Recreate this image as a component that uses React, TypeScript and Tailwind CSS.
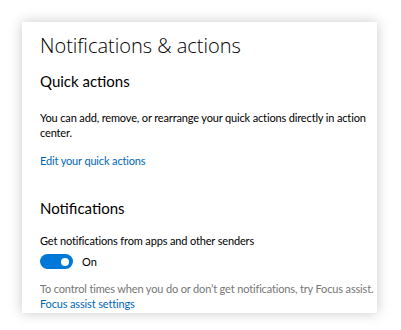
import React from 'react';

export default function App() {
  return (
    <div className="w-[401px] h-[330px] bg-white pt-[22px] pl-[22px] font-['Lato',sans-serif] text-black">
      <div className="w-[355px] h-[291px] bg-white shadow-[0_0_12px_rgba(0,0,0,0.22)] pl-[18px] pt-[10px]">
        <h1 className="font-['Open_Sans',sans-serif] text-[20px] leading-[28px] font-light">Notifications &amp; actions</h1>

        <h2 className="mt-[11px] text-[15px] leading-[20px]">Quick actions</h2>
        <p className="mt-[19px] w-[336px] text-[11px] leading-[15px] tracking-[-0.15px]">
          You can add, remove, or rearrange your quick actions directly in action center.
        </p>
        <a className="block mt-[13px] text-[11px] leading-[15px] tracking-[-0.15px] text-[#0067b8]">Edit your quick actions</a>

        <h2 className="mt-[30px] text-[15px] leading-[20px]">Notifications</h2>
        <p className="mt-[15px] text-[11px] leading-[15px] tracking-[-0.15px]">Get notifications from apps and other senders</p>
        <div className="mt-[6px] flex items-center gap-[9px]">
          <div className="w-[33px] h-[15px] rounded-full bg-[#0078d7] flex items-center justify-end pr-[4px]">
            <div className="w-[8px] h-[8px] rounded-full bg-white" />
          </div>
          <span className="text-[11px] leading-[15px]">On</span>
        </div>
        <p className="mt-[12px] w-[340px] text-[11px] leading-[15px] tracking-[-0.15px] text-[#767676]">
          To control times when you do or don’t get notifications, try Focus assist.
        </p>
        <a className="block text-[11px] leading-[15px] tracking-[-0.15px] text-[#0067b8]">Focus assist settings</a>
      </div>
    </div>
  );
}
